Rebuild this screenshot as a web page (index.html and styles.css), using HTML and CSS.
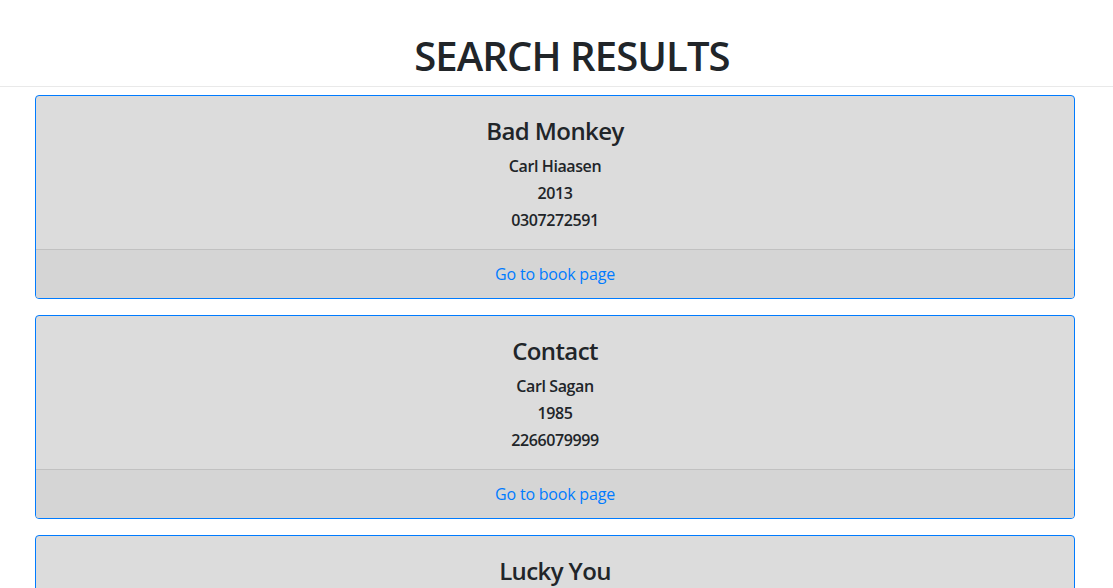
FILE: index.html
```html
<!DOCTYPE html>
<html lang="en">
<head>
<meta charset="utf-8">
<title>Search Results</title>
<link rel="stylesheet" href="styles.css">
</head>
<body>
<header class="page-header">
  <h1 class="page-title">SEARCH RESULTS</h1>
</header>
<main class="results">
  <div class="card">
    <div class="card-body">
      <h4 class="card-title">Bad Monkey</h4>
      <h6 class="card-text">Carl Hiaasen</h6>
      <h6 class="card-text">2013</h6>
      <h6 class="card-text">0307272591</h6>
    </div>
    <div class="card-footer"><a href="#" class="card-link">Go to book page</a></div>
  </div>
  <div class="card">
    <div class="card-body">
      <h4 class="card-title">Contact</h4>
      <h6 class="card-text">Carl Sagan</h6>
      <h6 class="card-text">1985</h6>
      <h6 class="card-text">2266079999</h6>
    </div>
    <div class="card-footer"><a href="#" class="card-link">Go to book page</a></div>
  </div>
  <div class="card">
    <div class="card-body">
      <h4 class="card-title">Lucky You</h4>
      <h6 class="card-text">Carl Hiaasen</h6>
      <h6 class="card-text">1997</h6>
      <h6 class="card-text">0679454446</h6>
    </div>
    <div class="card-footer"><a href="#" class="card-link">Go to book page</a></div>
  </div>
</main>
</body>
</html>
```

FILE: styles.css
```css
* { box-sizing: border-box; }
html, body { margin: 0; padding: 0; }
body {
  font-family: "Open Sans", "Noto Sans", sans-serif;
  font-size: 16px;
  line-height: 1.5;
  color: #212529;
  background: #fff;
}
.page-header {
  padding: 32px 0 6px 31px;
  border-bottom: 1px solid #e9e9e9;
  text-align: center;
}
.page-title {
  margin: 0;
  font-size: 40px;
  line-height: 47px;
  font-weight: 600;
  letter-spacing: -0.9px;
  padding-bottom: 1px;
}
.results {
  width: 1040px;
  margin: 8px 0 0 35px;
}
.card {
  border: 1px solid #007bff;
  border-radius: 4px;
  background: #dcdcdc;
  margin-bottom: 16px;
  overflow: hidden;
  text-align: center;
}
.card-body {
  padding: 20px 20px 19px;
}
.card-title {
  margin: 0 0 12px;
  padding-top: 1px;
  font-size: 24px;
  line-height: 28px;
  font-weight: 600;
  letter-spacing: -0.6px;
}
.card-text {
  margin: 0 0 8px;
  font-size: 16px;
  line-height: 19px;
  font-weight: 600;
  letter-spacing: -0.4px;
}
.card-text:last-child { margin-bottom: 0; }
.card-footer {
  padding: 12px 20px;
  border-top: 1px solid #c1c1c1;
  background: #d5d5d5;
}
.card-link {
  color: #007bff;
  text-decoration: none;
  letter-spacing: -0.2px;
}
```
